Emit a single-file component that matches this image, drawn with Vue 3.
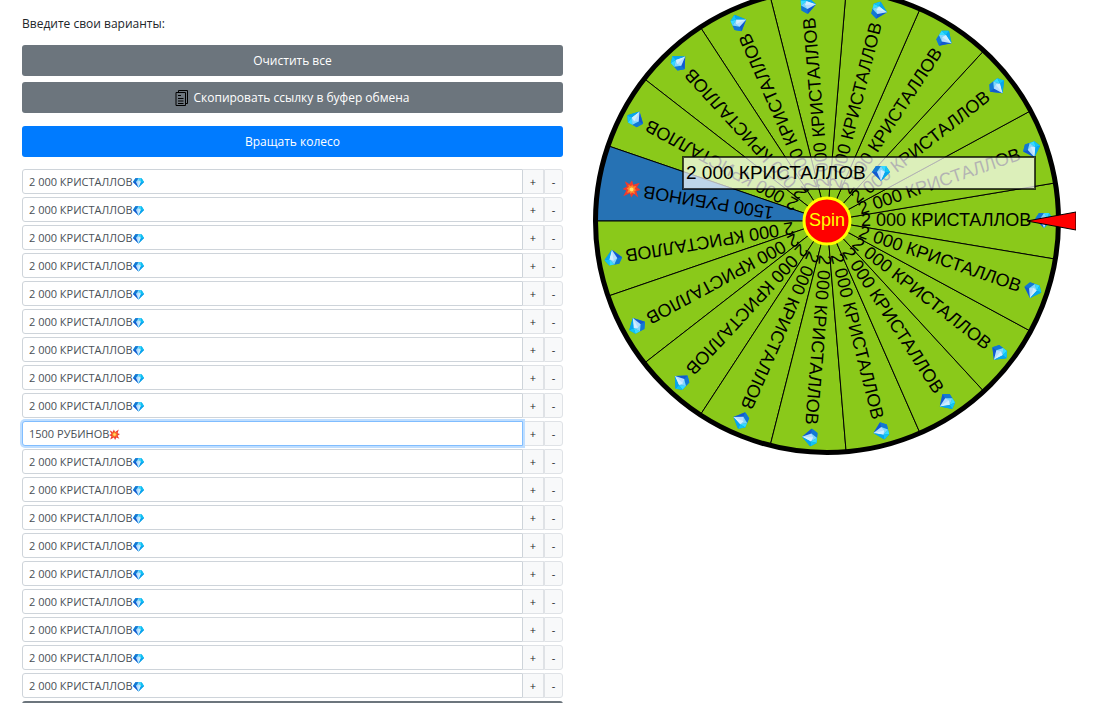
<script setup>
import { ref } from 'vue'

const GEM = '2 000 КРИСТАЛЛОВ'
const items = ref(
  Array.from({ length: 19 }, (_, i) =>
    i === 9 ? { text: '1500 РУБИНОВ', kind: 'burst' } : { text: GEM, kind: 'gem' }
  )
)

const focused = 9
const centre = { x: 234, y: 221 }
const radius = 231
const step = 360 / items.value.length

function rim(deg) {
  const a = (deg * Math.PI) / 180
  return `${radius * Math.cos(a)} ${radius * Math.sin(a)}`
}

// Sectors run anticlockwise, the first one centred on the pointer.
const sectors = items.value.map((item, i) => {
  const angle = -i * step
  const path = `M0 0L${rim(angle - step / 2)}A${radius} ${radius} 0 0 1 ${rim(angle + step / 2)}Z`
  return { ...item, angle, path }
})

function add(i) {
  items.value.splice(i + 1, 0, { text: '', kind: '' })
}
function remove(i) {
  items.value.splice(i, 1)
}
</script>

<template>
  <svg class="defs" aria-hidden="true">
    <symbol id="gem" viewBox="0 0 18 18">
      <path d="M4 2h10l4 6-9 9-9-9z" fill="#0a8bdc" />
      <path d="M4 2h5L5 8H0z" fill="#1377d3" />
      <path d="M9 2h5l-1 6z" fill="#35dcff" />
      <path d="M14 2l4 6h-5z" fill="#12c4f5" />
      <path d="M9 2l4 6-4 1-4-1z" fill="#7fd6fb" />
      <path d="M0 8h5l4 9z" fill="#1458cf" />
      <path d="M5 8l4-2 4 2-4 9z" fill="#b5dcff" />
      <path d="M9 6l4 2-4 9z" fill="#d0efff" />
      <path d="M13 8h5l-9 9z" fill="#07a6ee" />
    </symbol>
    <symbol id="burst" viewBox="0 0 18 18">
      <path d="M1 2l5 3 2-4 2 4 6-4-2 6 4 1-4 3 3 5-5-2-2 4-2-4-6 3 2-5-4-2 4-2z" fill="#f03a2e" />
      <path d="M5 5l3 1 1-2 1 2 3-1-1 3 2 1-2 2 1 2-3-1-1 2-1-2-3 1 1-3-2-1 2-1z" fill="#ff8a2a" />
      <circle cx="9" cy="9" r="2" fill="#ffe36a" />
    </symbol>
  </svg>
  <main class="page">
    <section class="panel">
      <p class="title">Введите свои варианты:</p>
      <button class="btn grey" type="button">Очистить все</button>
      <button class="btn grey" type="button">
        <svg class="copy" viewBox="0 0 14 16" aria-hidden="true">
          <path d="M3.5 2.5V.5h9v13h-2" />
          <path d="M1 2.5h9.5v13H1z" />
          <path d="M3 5.5h3M3 8.5h5.5M3 11h5.5M3 13.5h5.5" />
        </svg>
        Скопировать ссылку в буфер обмена
      </button>
      <button class="btn blue" type="button">Вращать колесо</button>
      <ul class="list">
        <li v-for="(item, i) in items" :key="i" class="row">
          <label class="field">
            <input v-model="item.text" type="text" :class="{ focus: i === focused }" :aria-label="`Вариант ${i + 1}`" />
            <svg v-if="item.kind" :class="['emoji', item.kind]" aria-hidden="true"><use :href="`#${item.kind}`" /></svg>
          </label>
          <button class="small plus" type="button" @click="add(i)">+</button>
          <button class="small minus" type="button" @click="remove(i)">-</button>
        </li>
      </ul>
      <button class="btn grey last" type="button" aria-label="Добавить"></button>
    </section>
    <section class="wheel">
      <svg viewBox="0 0 483 456" role="img" aria-label="Колесо">
        <g :transform="`translate(${centre.x} ${centre.y})`">
          <path
            v-for="(s, i) in sectors"
            :key="i"
            :d="s.path"
            :fill="s.kind === 'gem' ? '#8ac91a' : '#2672b4'"
            stroke="#000"
          />
          <g v-for="(s, i) in sectors" :key="'t' + i" :transform="`rotate(${s.angle})`">
            <text class="label" :x="s.kind === 'gem' ? 34 : 54" y="5">{{ s.text }}</text>
            <use :href="`#${s.kind}`" :x="s.kind === 'gem' ? 208 : 189" y="-10" width="18" height="18" />
          </g>
          <circle r="231.5" fill="none" stroke="#000" stroke-width="5" />
        </g>
        <rect x="90" y="157" width="352" height="32" fill="#fff" fill-opacity=".7" stroke="#000" stroke-opacity=".7" stroke-width="2" />
        <text class="winner" x="93" y="179">{{ GEM }}</text>
        <use href="#gem" x="279" y="164" width="18" height="18" />
        <circle cx="234" cy="221" r="23" fill="#f00" stroke="#ff0" stroke-width="3" />
        <text class="spin" x="234" y="226" text-anchor="middle">Spin</text>
        <path d="M434 221L483 212V230z" fill="#f00" stroke="#000" />
      </svg>
    </section>
  </main>
</template>

<style>
body {
  margin: 0;
  background: #fff;
  overflow: hidden;
}
</style>

<style scoped>
.defs {
  position: absolute;
  width: 0;
  height: 0;
}
.page {
  display: grid;
  grid-template-columns: 541fr 483fr;
  gap: 30px;
  padding: 0 30px 0 22px;
  height: 100vh;
  overflow: hidden;
  font-family: "Open Sans", "Noto Sans", sans-serif;
  color: #212529;
}
.panel {
  display: flex;
  flex-direction: column;
  min-width: 0;
}
.title {
  margin: 14px 0 11px;
  font-size: 12px;
  line-height: 20px;
}
.btn {
  display: flex;
  flex: none;
  align-items: center;
  justify-content: center;
  height: 31px;
  margin: 0 0 6px;
  padding: 0;
  border: 0;
  border-radius: 3px;
  color: #fff;
  font: inherit;
  font-size: 12px;
}
.grey {
  background: #6c757d;
}
.blue {
  margin: 7px 0 12px;
  background: #007bff;
}
.copy {
  width: 14px;
  height: 16px;
  margin-right: 4px;
  fill: none;
  stroke: #000;
}
.list {
  margin: 0;
  padding: 0;
  list-style: none;
}
.row {
  display: flex;
  height: 25px;
  margin-bottom: 3px;
}
.field {
  position: relative;
  flex: 1;
}
input {
  box-sizing: border-box;
  display: block;
  width: 100%;
  height: 25px;
  padding: 0 6px;
  border: 1px solid #ced4da;
  border-radius: 3px 0 0 3px;
  color: #495057;
  font: inherit;
  font-size: 11px;
  outline: 0;
}
input.focus {
  position: relative;
  border-color: #80bdff;
  box-shadow: 0 0 0 2px #bfdeff;
}
.emoji {
  position: absolute;
  top: 8px;
  left: 111px;
  width: 11px;
  height: 11px;
}
.emoji.burst {
  left: 87px;
}
.small {
  box-sizing: border-box;
  height: 25px;
  padding: 0;
  border: 1px solid #dfe2e6;
  background: #f8f9fa;
  color: #212529;
  font: inherit;
  font-size: 11px;
}
.plus {
  width: 21px;
  border-left: 0;
}
.minus {
  width: 19px;
  border-radius: 0 3px 3px 0;
}
.last {
  margin: 0;
}
.wheel svg {
  display: block;
  width: 100%;
}
.wheel text {
  font-family: "Liberation Sans", Arial, sans-serif;
}
.label {
  font-size: 18px;
}
.winner {
  font-size: 19px;
}
.spin {
  font-size: 18px;
  fill: #ff0;
}
</style>
